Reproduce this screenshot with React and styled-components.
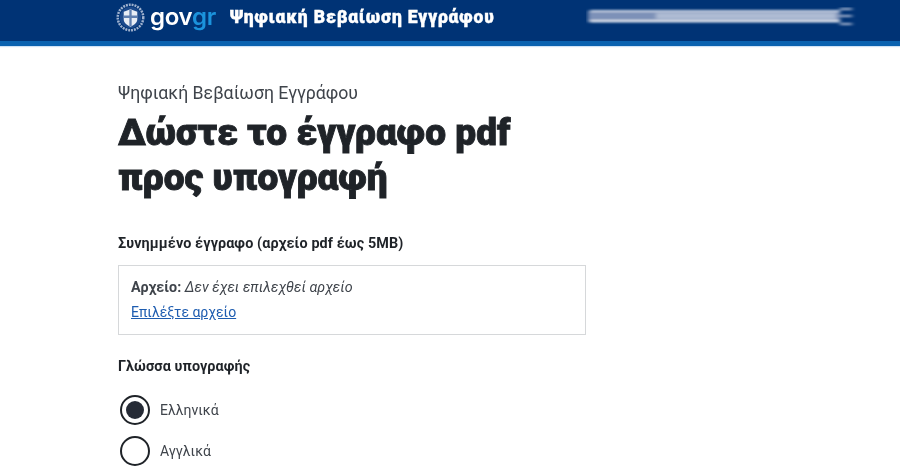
import React from "react";
import styled, { createGlobalStyle } from "styled-components";

const Global = createGlobalStyle`
  html, body { margin: 0; padding: 0; background: #fff; height: 100%; overflow: hidden; }
  body { font-family: Roboto, "Noto Sans", sans-serif; color: #1f2328; }
`;
const Page = styled.div`
  width: 900px;
  height: 471px;
  overflow: hidden;
  display: flex;
  flex-direction: column;
  filter: blur(0.35px);
`;
const Header = styled.header`
  flex: none;
  box-sizing: border-box;
  height: 46px;
  background: #003375;
  border-bottom: 5px solid #0a62b0;
  box-shadow: 0 1px 1px #cfe2f5;
  display: flex;
  align-items: center;
  padding: 0 0 7px 116px;
`;
const Emblem = styled.svg`
  width: 29px;
  height: 29px;
  flex: none;
`;
const Wordmark = styled.span`
  margin-left: 5px;
  font-family: Inter, sans-serif;
  font-size: 24px;
  line-height: 28px;
  font-weight: 600;
  color: #fff;
  letter-spacing: -0.3px;
`;
const WordAccent = styled.span`
  color: #1b93dc;
`;
const ServiceName = styled.span`
  margin-left: 14px;
  font-size: 17.5px;
  font-weight: 900;
  color: #fff;
  letter-spacing: 0.88px;
  white-space: nowrap;
  -webkit-text-stroke: 0.4px #fff;
`;
const Smear = styled.svg`
  margin-left: auto;
  margin-right: 42px;
  width: 272px;
  height: 20px;
  flex: none;
`;
const Main = styled.main`
  padding: 37px 0 0 118px;
  display: flex;
  flex-direction: column;
  align-items: flex-start;
`;
const Caption = styled.div`
  font-size: 17.7px;
  line-height: 20px;
  color: #3f444b;
`;
const Title = styled.h1`
  margin: 7px 0 0;
  font-size: 37px;
  line-height: 45px;
  font-weight: 900;
  color: #1f2328;
  letter-spacing: 0.05px;
  -webkit-text-stroke: 0.9px #1f2328;
`;
const Label = styled.div`
  margin-top: ${(p) => p.$top}px;
  font-size: 14.4px;
  line-height: 18px;
  font-weight: 700;
  color: #1f2328;
  letter-spacing: 0.1px;
`;
const FileBox = styled.div`
  margin-top: 12px;
  width: 468px;
  height: 70px;
  box-sizing: border-box;
  border: 1px solid #d6d8da;
  padding: 11px 12px;
  font-size: 14.3px;
  line-height: 20px;
  color: #3f444b;
`;
const Row = styled.div`
  margin-bottom: 5px;
`;
const FileKey = styled.strong`
  font-weight: 700;
`;
const FileValue = styled.em`
  font-style: italic;
`;
const FileLink = styled.a`
  font-size: 14px;
  color: #1d5cb0;
  text-decoration: underline;
`;
const RadioGroup = styled.div`
  margin-top: 19px;
  display: flex;
  flex-direction: column;
  gap: 11px;
`;
const RadioRow = styled.label`
  display: flex;
  align-items: center;
  gap: 10px;
  margin-left: 2px;
  font-size: 14px;
  color: #3f444b;
`;
const RadioCircle = styled.span`
  width: 30px;
  height: 30px;
  box-sizing: border-box;
  border: 2px solid #1f2328;
  border-radius: 50%;
  display: flex;
  align-items: center;
  justify-content: center;
  &::after {
    content: "";
    width: 18px;
    height: 18px;
    border-radius: 50%;
    background: ${(p) => (p.$checked ? "#262b36" : "transparent")};
  }
`;

export default function App() {
  return (
    <Page>
      <Global />
      <Header>
        <Emblem viewBox="0 0 30 30">
          <circle cx="15" cy="15" r="13.2" fill="none" stroke="#9fb2cf" strokeWidth="2.6" strokeDasharray="2 1" />
          <circle cx="15" cy="15" r="11" fill="#1c4a8c" />
          <path d="M8 9 L15 6.5 L22 9 V17 C22 21 18 23 15 24.5 C12 23 8 21 8 17 Z" fill="#e8edf5" />
          <path d="M13.8 7 h2.4 v17 h-2.4 Z M8 13 h14 v2.4 h-14 Z" fill="#5f7fb0" />
        </Emblem>
        <Wordmark>gov<WordAccent>gr</WordAccent></Wordmark>
        <ServiceName>Ψηφιακή Βεβαίωση Εγγράφου</ServiceName>
        <Smear viewBox="0 0 272 20">
          <defs>
            <filter id="smear" x="-5%" y="-50%" width="110%" height="200%">
              <feGaussianBlur stdDeviation="2 1" />
            </filter>
          </defs>
          <g filter="url(#smear)">
            <rect x="2" y="4" width="252" height="11" fill="#7d91b8" />
            <rect x="4" y="3" width="250" height="2" fill="#c8d1e3" />
            <rect x="4" y="13" width="250" height="2.4" fill="#e2e7f0" />
            <rect x="70" y="6" width="180" height="6" fill="#aebbd3" />
            <rect x="254" y="1" width="12" height="2" fill="#a7b5cf" />
            <rect x="254" y="8" width="12" height="2" fill="#a7b5cf" />
            <rect x="254" y="16" width="12" height="2" fill="#a7b5cf" />
          </g>
        </Smear>
      </Header>
      <Main>
        <Caption>Ψηφιακή Βεβαίωση Εγγράφου</Caption>
        <Title>Δώστε το έγγραφο pdf<br />προς υπογραφή</Title>
        <Label $top={35}>Συνημμένο έγγραφο (αρχείο pdf έως 5MB)</Label>
        <FileBox>
          <Row><FileKey>Αρχείο:</FileKey> <FileValue>Δεν έχει επιλεχθεί αρχείο</FileValue></Row>
          <Row><FileLink href="#">Επιλέξτε αρχείο</FileLink></Row>
        </FileBox>
        <Label $top={23}>Γλώσσα υπογραφής</Label>
        <RadioGroup>
          <RadioRow><RadioCircle $checked />Ελληνικά</RadioRow>
          <RadioRow><RadioCircle />Αγγλικά</RadioRow>
        </RadioGroup>
      </Main>
    </Page>
  );
}
